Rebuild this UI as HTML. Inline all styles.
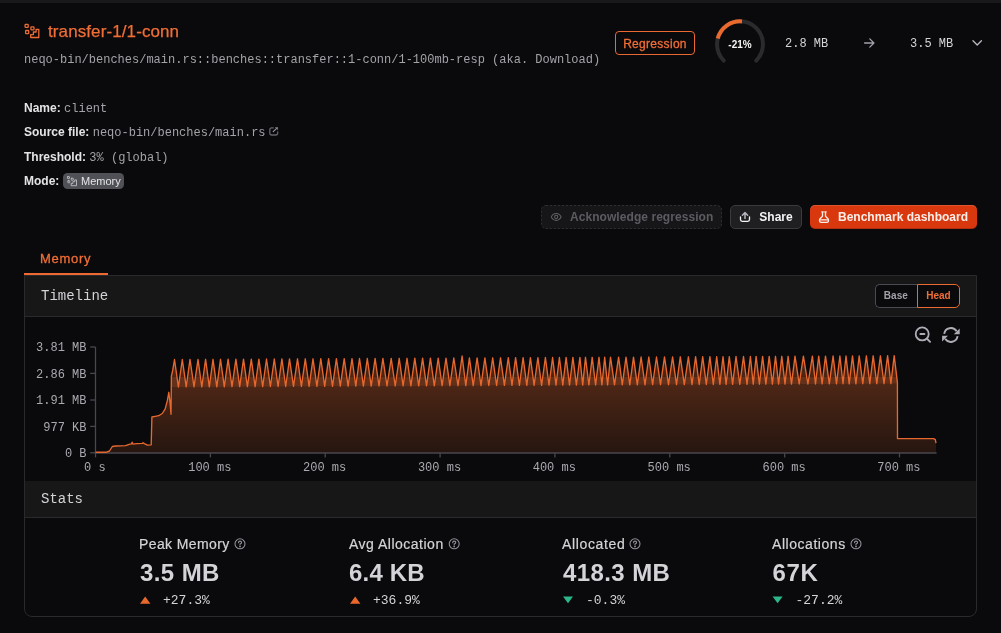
<!DOCTYPE html>
<html lang="en">
<head>
<meta charset="utf-8">
<title>transfer-1/1-conn</title>
<style>
*{box-sizing:border-box;margin:0;padding:0}
html,body{width:1001px;height:633px;overflow:hidden;background:#0a0a0c}
body{position:relative;font-family:"Liberation Sans",sans-serif;color:#d4d4d8;-webkit-font-smoothing:antialiased}
.abs{position:absolute;white-space:nowrap}
.mono{font-family:"Liberation Mono",monospace}
.topbar{left:0;top:0;width:1001px;height:3px;background:#19191b}
.title{left:48px;top:22px;font-size:17px;line-height:20px;color:#f06e36;letter-spacing:0.1px;-webkit-text-stroke:0.25px #f06e36}
.sub{left:24px;top:51.6px;font-size:12px;line-height:16px;color:#a3a3a8}
.row{left:24px;font-size:12px;line-height:16px;height:16px}
.row b{font-weight:700;color:#e4e4e7}
.row .v{font-family:"Liberation Mono",monospace;color:#a3a3a8;font-size:12px}
.badge-mode{left:63px;top:173px;width:61px;height:16px;border-radius:4.5px;background:#505057;color:#e4e4e7;font-size:11px;line-height:16px;padding-left:18px}
.reg{left:615px;top:31px;width:80px;height:24px;border:1px solid #ea6832;border-radius:4px;color:#f06e36;font-size:12px;line-height:24px;text-align:center;letter-spacing:0.3px;-webkit-text-stroke:0.3px #f06e36}
.gtext{left:715px;top:37.4px;width:50px;text-align:center;font-size:10px;line-height:16px;font-weight:700;color:#f4f4f5}
.val{font-size:12px;line-height:16px;color:#d4d4d8;top:36px}
.btn{top:205px;height:24px;border-radius:5px;font-size:12px;line-height:22px;font-weight:700}
.btn-ack{left:541px;width:181px;border:1px solid transparent;background:#161618;color:#5b5b62;padding-left:28px;letter-spacing:0.06px}
.btn-share{left:730px;width:72px;border:1px solid #3a3a3f;background:#1f1f22;color:#f4f4f5;padding-left:28.3px}
.btn-dash{left:810px;width:167px;background:#d9380f;box-shadow:inset 0 1px 0 rgba(255,255,255,0.15),inset 0 -1px 0 rgba(0,0,0,0.18);color:#fbeee8;padding-left:28px;line-height:24px}
.tab{left:40px;top:251px;font-size:13px;line-height:16px;color:#f06e36;letter-spacing:0.7px;-webkit-text-stroke:0.3px #f06e36}
.tabline{left:24px;top:273px;width:84px;height:2px;background:#ee6a32}
.panel{left:24px;top:275px;width:953px;height:342px;border:1px solid #2a2a2d;border-radius:0 0 8px 8px;background:#0a0a0c}
.phead{left:25px;width:951px;background:#171718}
.ph1{top:276px;height:41px;border-bottom:1px solid #2a2a2d}
.ph2{top:481px;height:37px;border-bottom:1px solid #2a2a2d}
.ptitle{left:41px;font-size:14px;line-height:18px;color:#d4d4d8}
.tog{top:284px;height:24px;font-size:10px;font-weight:700;line-height:22px;text-align:center;background:#0a0a0c}
.tog-base{left:875px;width:43px;border:1px solid #4a4a52;border-right:none;border-radius:5px 0 0 5px;color:#a1a1aa;padding-right:2.4px}
.tog-head{left:917px;width:43px;border:1px solid #ea6832;border-radius:0 5px 5px 0;color:#f06e36}
.slabel{top:535px;font-size:14px;line-height:18px;color:#d4d4d8;letter-spacing:0.4px;-webkit-text-stroke:0.2px #d4d4d8}
.sval{top:558px;font-size:24px;line-height:30px;font-weight:700;color:#d4d4d8;letter-spacing:0.2px}
.sdelta{top:593px;font-size:13px;line-height:16px;color:#d4d4d8}
svg{position:absolute;left:0;top:0;overflow:visible}
</style>
</head>
<body>
<div id="root" style="position:absolute;left:0;top:0;width:1001px;height:633px;will-change:transform">
<div class="abs topbar"></div>

<!-- header -->
<div class="abs title">transfer-1/1-conn</div>
<div class="abs sub mono">neqo-bin/benches/main.rs::benches::transfer::1-conn/1-100mb-resp (aka. Download)</div>

<div class="abs row" style="top:100px"><b>Name:</b> <span class="v">client</span></div>
<div class="abs row" style="top:124px"><b>Source file:</b> <span class="v">neqo-bin/benches/main.rs</span></div>
<div class="abs row" style="top:149px"><b>Threshold:</b> <span class="v">3% (global)</span></div>
<div class="abs row" style="top:173px"><b>Mode:</b></div>
<div class="abs badge-mode">Memory</div>

<div class="abs reg">Regression</div>
<div class="abs gtext">-21%</div>
<div class="abs val mono" style="left:785px">2.8 MB</div>
<div class="abs val mono" style="left:910px">3.5 MB</div>

<!-- buttons -->
<div class="abs btn btn-ack">Acknowledge regression</div>
<div class="abs btn btn-share">Share</div>
<div class="abs btn btn-dash">Benchmark dashboard</div>

<!-- tabs + panel -->
<div class="abs tab">Memory</div>
<div class="abs panel"></div>
<div class="abs tabline"></div>
<div class="abs phead ph1"></div>
<div class="abs ptitle mono" style="top:287px">Timeline</div>
<div class="abs tog tog-base">Base</div>
<div class="abs tog tog-head">Head</div>
<div class="abs phead ph2"></div>
<div class="abs ptitle mono" style="top:490px">Stats</div>

<!-- stats -->
<div class="abs slabel" style="left:139px">Peak Memory</div>
<div class="abs sval" style="left:140px;letter-spacing:0.4px">3.5 MB</div>
<div class="abs sdelta mono" style="left:163px">+27.3%</div>

<div class="abs slabel" style="left:349px;letter-spacing:0.5px">Avg Allocation</div>
<div class="abs sval" style="left:349px">6.4 KB</div>
<div class="abs sdelta mono" style="left:373px">+36.9%</div>

<div class="abs slabel" style="left:562px;letter-spacing:0.65px">Allocated</div>
<div class="abs sval" style="left:563px;letter-spacing:0.4px">418.3 MB</div>
<div class="abs sdelta mono" style="left:586px">-0.3%</div>

<div class="abs slabel" style="left:772px;letter-spacing:0.55px">Allocations</div>
<div class="abs sval" style="left:772.5px;letter-spacing:0.6px">67K</div>
<div class="abs sdelta mono" style="left:795.5px">-27.2%</div>

<!-- ICONS-AND-CHART -->
<svg width="1001" height="633" viewBox="0 0 1001 633">
<defs><linearGradient id="ag" x1="0" y1="384" x2="0" y2="453" gradientUnits="userSpaceOnUse"><stop offset="0" stop-color="#e8682c" stop-opacity="0.3"/><stop offset="1" stop-color="#e8682c" stop-opacity="0.125"/></linearGradient><clipPath id="ac"><path d="M95.6,452.2 L106.5,452.2 L109.5,451.0 L112.3,446.5 L116.0,446.0 L125.7,445.7 L129.1,444.4 L131.4,443.9 L132.1,442.2 L132.8,444.1 L137.0,443.7 L142.2,443.4 L143.0,442.7 L144.3,443.6 L147.4,445.1 L151.2,444.8 L151.9,417.0 L155.2,416.4 L158.7,415.7 L162.2,413.5 L165.1,409.1 L167.4,400.4 L168.8,392.3 L170.0,402.2 L171.0,414.3 L171.4,376.1 L172.6,370.9 L174.5,359.5 L178.4,387.0 L182.3,359.5 L186.2,386.9 L190.0,359.4 L194.0,386.9 L198.0,359.4 L201.8,386.9 L205.6,359.3 L209.3,386.8 L213.0,359.3 L216.8,386.8 L220.5,359.3 L224.3,386.8 L228.1,359.2 L232.0,386.7 L235.9,359.2 L239.7,386.7 L243.5,359.1 L247.4,386.7 L251.3,359.1 L255.1,386.6 L258.9,359.1 L262.7,386.6 L266.5,359.0 L270.4,386.5 L274.3,359.0 L278.1,386.5 L281.9,358.9 L285.7,386.5 L289.5,358.9 L293.5,386.4 L297.5,358.8 L301.4,386.4 L305.3,358.8 L309.1,386.4 L313.0,358.8 L316.9,386.3 L320.8,358.7 L324.7,386.3 L328.6,358.7 L332.5,386.3 L336.4,358.6 L340.3,386.2 L344.2,358.6 L348.1,386.2 L352.0,358.6 L355.8,386.1 L359.5,358.5 L363.4,386.1 L367.3,358.5 L371.2,386.1 L375.1,358.4 L379.0,386.0 L382.9,358.4 L387.0,386.0 L391.2,358.4 L395.2,386.0 L399.2,358.3 L403.1,385.9 L407.0,358.3 L410.9,385.9 L414.8,358.2 L418.7,385.8 L422.6,358.2 L426.5,385.8 L430.4,358.1 L434.3,385.8 L438.2,358.1 L442.1,385.7 L446.0,358.1 L449.9,385.7 L453.8,358.0 L458.0,385.7 L462.1,356.0 L465.8,385.6 L469.4,357.9 L473.2,385.6 L477.1,357.9 L481.0,385.6 L484.9,357.9 L488.8,385.5 L492.7,357.8 L496.6,385.5 L500.5,357.8 L504.4,385.4 L508.3,357.7 L512.0,385.4 L515.6,357.7 L519.4,385.4 L523.1,357.7 L526.8,385.3 L530.4,357.6 L534.1,385.3 L537.9,357.6 L541.6,385.3 L545.4,357.5 L549.0,385.2 L552.6,357.5 L556.0,385.2 L559.4,357.5 L562.8,385.2 L566.1,357.4 L569.5,385.1 L572.9,357.4 L576.4,385.1 L579.9,357.4 L582.7,385.1 L585.5,357.3 L588.9,385.0 L592.2,357.3 L595.6,385.0 L599.0,357.3 L601.9,385.0 L604.7,357.2 L607.6,385.0 L610.5,357.2 L614.5,384.9 L618.6,357.2 L622.3,384.9 L626.0,357.1 L629.8,384.8 L633.5,357.1 L637.3,384.8 L641.1,357.0 L645.0,384.8 L648.8,357.0 L652.6,384.7 L656.5,357.0 L660.5,384.7 L664.5,356.9 L668.5,384.7 L672.6,356.9 L676.5,384.6 L680.3,356.8 L684.3,384.6 L688.4,356.8 L692.0,384.6 L695.6,356.7 L699.2,384.5 L702.7,356.7 L706.3,384.5 L709.9,356.7 L713.3,384.5 L716.7,356.6 L719.9,384.4 L723.0,356.6 L726.1,384.4 L729.3,356.6 L732.6,384.4 L736.0,356.5 L739.8,384.3 L743.5,356.5 L747.0,384.3 L750.4,356.5 L753.2,384.3 L756.1,356.4 L759.4,384.2 L762.6,356.4 L765.9,384.2 L769.2,356.4 L772.4,384.2 L775.5,356.3 L778.6,384.1 L781.8,356.3 L785.0,384.1 L788.1,356.3 L791.5,384.1 L795.0,356.2 L799.2,384.0 L803.4,356.2 L807.9,384.0 L812.4,356.1 L815.5,384.0 L818.7,356.1 L822.1,383.9 L825.5,356.1 L829.3,383.9 L833.1,356.0 L836.5,383.9 L839.9,356.0 L843.0,383.8 L846.0,356.0 L849.2,383.8 L852.5,355.9 L855.9,383.8 L859.2,355.9 L862.8,383.7 L866.4,355.8 L869.8,383.7 L873.2,355.8 L876.8,383.7 L880.4,355.8 L884.0,383.6 L887.6,355.7 L890.9,383.6 L894.2,355.7 L897.4,382.3 L897.5,438.6 L933.6,438.6 L935.3,439.6 L936.0,443.2 L936,452.6 L95.6,452.6 Z"/></clipPath></defs>
<g fill="none" stroke="#ee6c34" stroke-width="1.3" stroke-linejoin="round" stroke-linecap="round"><rect x="25.10" y="24.30" width="3.10" height="3.10" rx="0.70"/><rect x="30.90" y="26.80" width="3.10" height="3.10" rx="0.70"/><rect x="25.60" y="30.50" width="3.10" height="3.10" rx="0.70"/><path d="M30.70,37.50 V34.60 H33.40 V32.00 H36.10 V29.30 H38.80 V37.50 Z"/></g>
<g fill="none" stroke="#c0c0c8" stroke-width="0.9" stroke-linejoin="round" stroke-linecap="round"><rect x="67.47" y="176.60" width="2.05" height="2.05" rx="0.46"/><rect x="71.29" y="178.25" width="2.05" height="2.05" rx="0.46"/><rect x="67.80" y="180.69" width="2.05" height="2.05" rx="0.46"/><path d="M71.16,185.31 V183.40 H72.94 V181.68 H74.73 V179.90 H76.51 V185.31 Z"/></g>
<g fill="none" stroke-linecap="round" stroke-linejoin="round"><path d="M273.2,127.9 H271.7 Q269.8,127.9 269.8,129.8 V133.1 Q269.8,135 271.7,135 H275.8 Q277.7,135 277.7,133.1 V131.9" stroke="#64646c" stroke-width="1.3"/><path d="M275.4,127.6 H277.6 V129.8" stroke="#5a5a62" stroke-width="1"/><path d="M273.2,131.7 L277.2,127.9" stroke="#9c9ca4" stroke-width="1.1"/></g>
<path d="M723.74,60.56 A23,23 0 1 1 756.26,60.56" fill="none" stroke="#2b2b2e" stroke-width="4" stroke-linecap="round"/>
<path d="M717.73,38.54 A23,23 0 0 1 742.00,21.39" fill="none" stroke="#ea6a2e" stroke-width="4"/>
<g fill="none" stroke="#a1a1aa" stroke-width="1.3" stroke-linecap="round" stroke-linejoin="round"><path d="M864.6,43 H873.8 M869.8,38.9 L873.9,43 L869.8,47.1"/></g>
<path d="M973,40.8 L977.2,45 L981.4,40.8" fill="none" stroke="#b8b8c0" stroke-width="1.35" stroke-linecap="round" stroke-linejoin="round"/>
<rect x="541.5" y="205.5" width="180" height="23" rx="4.5" fill="none" stroke="#2e2e33" stroke-width="1" stroke-dasharray="2 2"/>
<g fill="none" stroke="#5f5f66" stroke-width="1.1"><path d="M551.3,216.9 C553.2,212.3 559.2,212.3 561.1,216.9 C559.2,221.5 553.2,221.5 551.3,216.9 Z"/><circle cx="556.2" cy="216.9" r="1.6"/></g>
<g fill="none" stroke-linecap="round" stroke-linejoin="round"><path d="M740.5,216.8 V219.6 Q740.5,221.3 742.2,221.3 H747.8 Q749.5,221.3 749.5,219.6 V216.8" stroke="#f4f4f5" stroke-width="1.3"/><path d="M745,218.6 V213 M742.4,215.2 L745,212.6 L747.6,215.2" stroke="#b4b4bc" stroke-width="1.5"/></g>
<g fill="none" stroke="#fbeee8" stroke-width="1.3" stroke-linecap="round" stroke-linejoin="round"><path d="M821.6,211.9 H826.4" stroke-opacity="0.7"/><path d="M822.5,212.2 V216.3 L819.8,219 Q818.7,222.3 821.4,222.3 H826.6 Q829.3,222.3 828.2,219 L825.5,216.3 V212.2"/><path d="M820.4,219.8 H827.6"/></g>
<g fill="none" stroke="#adadb5" stroke-width="1.8" stroke-linecap="round"><circle cx="922.2" cy="333.9" r="6.5"/><path d="M927.3,339 L930.1,341.9"/><path d="M920.4,334.1 H924.4" stroke-width="2"/></g>
<g fill="none" stroke="#adadb5" stroke-width="1.9"><path d="M944.2,333.8 A6.8,6.8 0 0 1 956.6,331.2 M957.6,336.2 A6.8,6.8 0 0 1 945.2,338.8"/></g><path d="M959.7,328.4 V334.3 H953.8 Z M942.1,341.6 V335.7 H948 Z" fill="#adadb5"/>
<g fill="none" stroke="#92929b" stroke-width="1.05" stroke-linecap="round" transform="translate(0,-0.5)"><circle cx="240" cy="544.3" r="5"/><path d="M238.5,543.2 Q238.5,541.6 240,541.6 Q241.6,541.6 241.6,543 Q241.6,544 240,544.6 V545.2"/><circle cx="240" cy="546.9" r="0.35" fill="#8b8b94"/></g>
<g fill="none" stroke="#92929b" stroke-width="1.05" stroke-linecap="round" transform="translate(0,-0.5)"><circle cx="454.2" cy="544.3" r="5"/><path d="M452.7,543.2 Q452.7,541.6 454.2,541.6 Q455.8,541.6 455.8,543 Q455.8,544 454.2,544.6 V545.2"/><circle cx="454.2" cy="546.9" r="0.35" fill="#8b8b94"/></g>
<g fill="none" stroke="#92929b" stroke-width="1.05" stroke-linecap="round" transform="translate(0,-0.5)"><circle cx="635" cy="544.3" r="5"/><path d="M633.5,543.2 Q633.5,541.6 635,541.6 Q636.6,541.6 636.6,543 Q636.6,544 635,544.6 V545.2"/><circle cx="635" cy="546.9" r="0.35" fill="#8b8b94"/></g>
<g fill="none" stroke="#92929b" stroke-width="1.05" stroke-linecap="round" transform="translate(0,-0.5)"><circle cx="856" cy="544.3" r="5"/><path d="M854.5,543.2 Q854.5,541.6 856,541.6 Q857.6,541.6 857.6,543 Q857.6,544 856,544.6 V545.2"/><circle cx="856" cy="546.9" r="0.35" fill="#8b8b94"/></g>
<path d="M140,603.8 L145.2,596.6 L150.4,603.8 Z" fill="#e8682c"/>
<path d="M350,603.8 L355.2,596.6 L360.4,603.8 Z" fill="#e8682c"/>
<path d="M563,596.6 L573,596.6 L568,603.2 Z" fill="#2bb78a"/>
<path d="M772.6,596.6 L782.6,596.6 L777.6,603.2 Z" fill="#2bb78a"/>
<g stroke="#47474f" stroke-width="1.3" fill="none"><path d="M95.5,347 V453 M95,453 H936.6"/>
<path d="M90.2,347 H95.5"/>
<path d="M90.2,373.4 H95.5"/>
<path d="M90.2,400 H95.5"/>
<path d="M90.2,426.4 H95.5"/>
<path d="M90.2,452.8 H95.5"/>
<path d="M95.5,453 V457.4"/>
<path d="M210.4,453 V457.4"/>
<path d="M325.2,453 V457.4"/>
<path d="M440.1,453 V457.4"/>
<path d="M554.9,453 V457.4"/>
<path d="M669.8,453 V457.4"/>
<path d="M784.7,453 V457.4"/>
<path d="M899.5,453 V457.4"/>
</g>
<g clip-path="url(#ac)"><rect x="90" y="345" width="850" height="31.7" fill="#e8682c" fill-opacity="0.3"/><path d="M90,376.7 H940 V383.6 L894,383.7 L174,387.1 H90 Z" fill="#e8682c" fill-opacity="0.4"/><path d="M90,387.1 H174 L894,383.7 H940 V454 H90 Z" fill="url(#ag)"/></g>
<path d="M95.6,452.2 L106.5,452.2 L109.5,451.0 L112.3,446.5 L116.0,446.0 L125.7,445.7 L129.1,444.4 L131.4,443.9 L132.1,442.2 L132.8,444.1 L137.0,443.7 L142.2,443.4 L143.0,442.7 L144.3,443.6 L147.4,445.1 L151.2,444.8 L151.9,417.0 L155.2,416.4 L158.7,415.7 L162.2,413.5 L165.1,409.1 L167.4,400.4 L168.8,392.3 L170.0,402.2 L171.0,414.3 L171.4,376.1 L172.6,370.9 L174.5,359.5 L178.4,387.0 L182.3,359.5 L186.2,386.9 L190.0,359.4 L194.0,386.9 L198.0,359.4 L201.8,386.9 L205.6,359.3 L209.3,386.8 L213.0,359.3 L216.8,386.8 L220.5,359.3 L224.3,386.8 L228.1,359.2 L232.0,386.7 L235.9,359.2 L239.7,386.7 L243.5,359.1 L247.4,386.7 L251.3,359.1 L255.1,386.6 L258.9,359.1 L262.7,386.6 L266.5,359.0 L270.4,386.5 L274.3,359.0 L278.1,386.5 L281.9,358.9 L285.7,386.5 L289.5,358.9 L293.5,386.4 L297.5,358.8 L301.4,386.4 L305.3,358.8 L309.1,386.4 L313.0,358.8 L316.9,386.3 L320.8,358.7 L324.7,386.3 L328.6,358.7 L332.5,386.3 L336.4,358.6 L340.3,386.2 L344.2,358.6 L348.1,386.2 L352.0,358.6 L355.8,386.1 L359.5,358.5 L363.4,386.1 L367.3,358.5 L371.2,386.1 L375.1,358.4 L379.0,386.0 L382.9,358.4 L387.0,386.0 L391.2,358.4 L395.2,386.0 L399.2,358.3 L403.1,385.9 L407.0,358.3 L410.9,385.9 L414.8,358.2 L418.7,385.8 L422.6,358.2 L426.5,385.8 L430.4,358.1 L434.3,385.8 L438.2,358.1 L442.1,385.7 L446.0,358.1 L449.9,385.7 L453.8,358.0 L458.0,385.7 L462.1,356.0 L465.8,385.6 L469.4,357.9 L473.2,385.6 L477.1,357.9 L481.0,385.6 L484.9,357.9 L488.8,385.5 L492.7,357.8 L496.6,385.5 L500.5,357.8 L504.4,385.4 L508.3,357.7 L512.0,385.4 L515.6,357.7 L519.4,385.4 L523.1,357.7 L526.8,385.3 L530.4,357.6 L534.1,385.3 L537.9,357.6 L541.6,385.3 L545.4,357.5 L549.0,385.2 L552.6,357.5 L556.0,385.2 L559.4,357.5 L562.8,385.2 L566.1,357.4 L569.5,385.1 L572.9,357.4 L576.4,385.1 L579.9,357.4 L582.7,385.1 L585.5,357.3 L588.9,385.0 L592.2,357.3 L595.6,385.0 L599.0,357.3 L601.9,385.0 L604.7,357.2 L607.6,385.0 L610.5,357.2 L614.5,384.9 L618.6,357.2 L622.3,384.9 L626.0,357.1 L629.8,384.8 L633.5,357.1 L637.3,384.8 L641.1,357.0 L645.0,384.8 L648.8,357.0 L652.6,384.7 L656.5,357.0 L660.5,384.7 L664.5,356.9 L668.5,384.7 L672.6,356.9 L676.5,384.6 L680.3,356.8 L684.3,384.6 L688.4,356.8 L692.0,384.6 L695.6,356.7 L699.2,384.5 L702.7,356.7 L706.3,384.5 L709.9,356.7 L713.3,384.5 L716.7,356.6 L719.9,384.4 L723.0,356.6 L726.1,384.4 L729.3,356.6 L732.6,384.4 L736.0,356.5 L739.8,384.3 L743.5,356.5 L747.0,384.3 L750.4,356.5 L753.2,384.3 L756.1,356.4 L759.4,384.2 L762.6,356.4 L765.9,384.2 L769.2,356.4 L772.4,384.2 L775.5,356.3 L778.6,384.1 L781.8,356.3 L785.0,384.1 L788.1,356.3 L791.5,384.1 L795.0,356.2 L799.2,384.0 L803.4,356.2 L807.9,384.0 L812.4,356.1 L815.5,384.0 L818.7,356.1 L822.1,383.9 L825.5,356.1 L829.3,383.9 L833.1,356.0 L836.5,383.9 L839.9,356.0 L843.0,383.8 L846.0,356.0 L849.2,383.8 L852.5,355.9 L855.9,383.8 L859.2,355.9 L862.8,383.7 L866.4,355.8 L869.8,383.7 L873.2,355.8 L876.8,383.7 L880.4,355.8 L884.0,383.6 L887.6,355.7 L890.9,383.6 L894.2,355.7 L897.4,382.3 L897.5,438.6 L933.6,438.6 L935.3,439.6 L936.0,443.2" fill="none" stroke="#e6682f" stroke-width="1.35" stroke-linejoin="round"/>
<g font-family="'Liberation Mono', monospace" font-size="12" fill="#a9a9af">
<text x="86.5" y="351.3" text-anchor="end">3.81 MB</text>
<text x="86.5" y="377.7" text-anchor="end">2.86 MB</text>
<text x="86.5" y="404.3" text-anchor="end">1.91 MB</text>
<text x="86.5" y="430.7" text-anchor="end">977 KB</text>
<text x="86.5" y="457.1" text-anchor="end">0 B</text>
<text x="94.9" y="471" text-anchor="middle">0 s</text>
<text x="209.8" y="471" text-anchor="middle">100 ms</text>
<text x="324.6" y="471" text-anchor="middle">200 ms</text>
<text x="439.5" y="471" text-anchor="middle">300 ms</text>
<text x="554.3" y="471" text-anchor="middle">400 ms</text>
<text x="669.2" y="471" text-anchor="middle">500 ms</text>
<text x="784.1" y="471" text-anchor="middle">600 ms</text>
<text x="898.9" y="471" text-anchor="middle">700 ms</text>
</g>
</svg>
</body>
</html>
